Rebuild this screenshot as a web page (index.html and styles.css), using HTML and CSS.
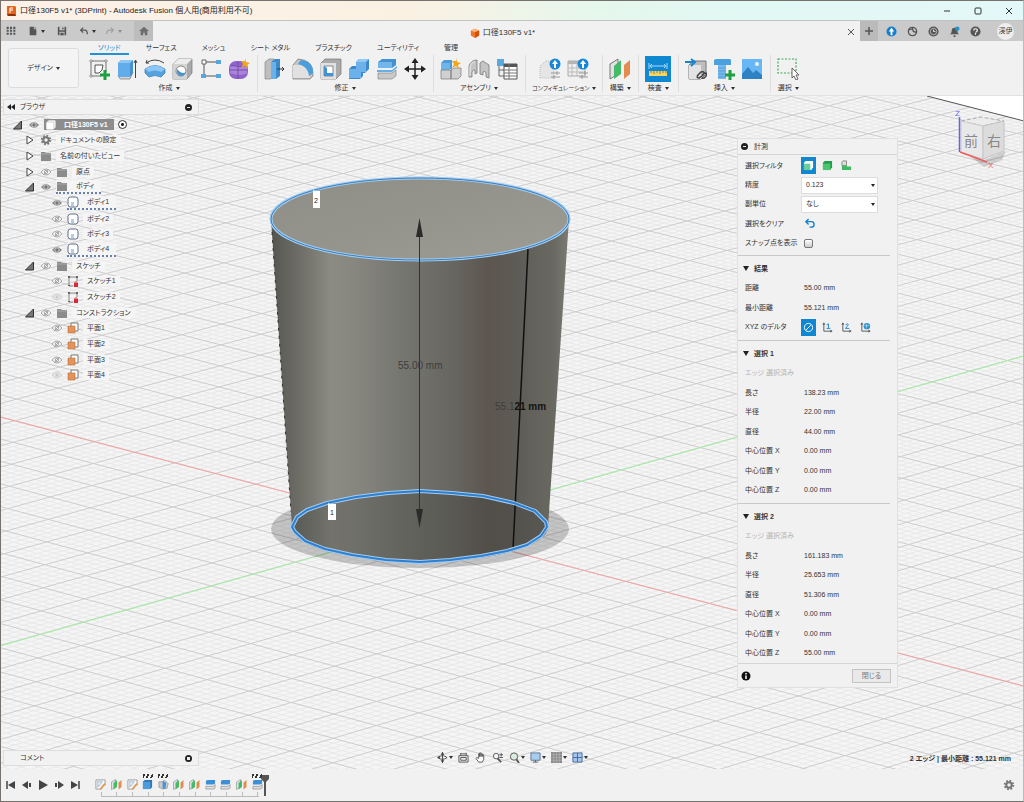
FILE: index.html
```html
<!DOCTYPE html>
<html lang="ja">
<head>
    <meta charset="UTF-8">
    <meta name="viewport" content="width=device-width, initial-scale=1.0">
    <title>口径130F5 v1* (3DPrint) - Autodesk Fusion</title>
    <link rel="stylesheet" href="styles.css">
</head>
<body>
    <svg class="sprite" aria-hidden="true">
        <!-- ribbon icons -->
        <symbol id="i-sketch" viewBox="0 0 22 22"><path d="M3 3h15v11M3 3v15h10" fill="none" stroke="#555" stroke-width=".8"/><path d="M7 7v8h4q4-2 4-8z" fill="#fff" stroke="#555"/><path d="M2 2h2v2H2zM17 2h2v2h-2zM2 17h2v2H2z" fill="#fff" stroke="#777" stroke-width=".7"/><path d="M17 12v10M12 17h10" stroke="#1fa045" stroke-width="3"/></symbol>
        <symbol id="i-extrude" viewBox="0 0 22 22"><path d="M2 17l3-3h12l-3 7H4z" fill="#d5d5d5" stroke="#777" stroke-width=".7"/><path d="M2 5l3-3h12v13l-3 4H2z" fill="#4592d3"/><path d="M2 5h12v14H3q-1 0-1-1z" fill="#62acea"/><path d="M2 5l3-3h12l-3 3z" fill="#8cc7f5"/><path d="M19.500 20V3M18 5l1.500-3L21 5" fill="none" stroke="#444"/></symbol>
        <symbol id="i-revolve" viewBox="0 0 22 22"><path d="M1 11q10-7 20 0v4l-4 4q-6-3-12 0l-4-4z" fill="#55a2df" stroke="#2f7dbd" stroke-width=".7"/><path d="M1 11q10-7 20 0l-4 3q-6-3-12 0z" fill="#8cc7f5"/><path d="M2 5q9-6 18 0M2 5l1-3M2 5h3" fill="none" stroke="#444"/></symbol>
        <symbol id="i-hole" viewBox="0 0 22 22"><path d="M1 6l5-5h14v14l-5 6H1z" fill="#a9a9a9" stroke="#777" stroke-width=".7"/><path d="M1 6h14v15H1z" fill="#d4d4d4"/><path d="M1 6l5-5h14l-5 5z" fill="#ececec"/><circle cx="9" cy="13" r="5" fill="#fff" stroke="#888"/><path d="M5 11q5 6 9 3-2 4-5 4-5-1-4-7z" fill="#4592d3"/></symbol>
        <symbol id="i-pattern" viewBox="0 0 22 22"><path d="M4 4v14h14M4 4h14" fill="none" stroke="#555"/><path d="M2 2h4v4H2z" fill="#fff" stroke="#666"/><path d="M16 2h5v4h-5zM1 16h5v4H1zM16 16h5v4h-5z" fill="#58a6df"/></symbol>
        <symbol id="i-form" viewBox="0 0 22 22"><rect x="1" y="3" width="19" height="18" rx="7" fill="#9065cb"/><path d="M2 9q7-3 17 0v6q-6 4-17 0z" fill="#aa84dc"/><path d="M1 12h18M10 4v17M3 7q10 3 16 0" fill="none" stroke="#6942a0" stroke-width=".8"/><path d="M17 0l1 4 4 1-3 2 1 4-3-3-4 2 2-4-2-3h4z" fill="#f2a51e"/></symbol>
        <symbol id="i-presspull" viewBox="0 0 22 22"><path d="M1 4l4-3h5v17l-3 3H1z" fill="#bebebe" stroke="#888" stroke-width=".7"/><path d="M7 4l4-3h5v17l-4 3H7z" fill="#3c89cd"/><path d="M7 4h5v17H7z" fill="#68b1ea"/><path d="M13 11h7M18 9l2 2-2 2" fill="none" stroke="#333"/></symbol>
        <symbol id="i-fillet" viewBox="0 0 22 22"><path d="M1 7l5-6q15 1 15 14v3l-3 3H1z" fill="#c4c4c4" stroke="#777" stroke-width=".7"/><path d="M1 20V7h7q9 2 10 13z" fill="#e1e1e1"/><path d="M9 2q12 1 12 13l-4 3Q16 8 6 6z" fill="#4b9edd"/></symbol>
        <symbol id="i-shell" viewBox="0 0 22 22"><path d="M1 5l4-4h16v15l-5 5H1z" fill="#aaa" stroke="#777" stroke-width=".7"/><path d="M1 5h15v16H1z" fill="#e1e1e1"/><path d="M4 8h9v10H4z" fill="#fff" stroke="#888"/><path d="M4 18V8l3 2v5h6v3z" fill="#4592d3"/></symbol>
        <symbol id="i-combine" viewBox="0 0 22 22"><path d="M8 4l3-3h10v10l-4 4h-2v3l-3 3H1V11l3-3h4z" fill="#3c89cd"/><path d="M8 4h10v10h-5v6H1v-9h7z" fill="#6bb2ea"/><path d="M8 4l3-3h10l-3 3z" fill="#92caf5"/></symbol>
        <symbol id="i-split" viewBox="0 0 22 22"><path d="M2 4l4-3h14v6l-4 3H2z" fill="#4592d3"/><path d="M2 4h14v6H2z" fill="#72b7ec"/><path d="M1 12h15l5-4v2l-5 4H1z" fill="#66aee8"/><path d="M2 15h14l4-3v6l-4 3H2z" fill="#c9c9c9" stroke="#888" stroke-width=".7"/></symbol>
        <symbol id="i-move" viewBox="0 0 22 22"><path d="M11 2v18M2 11h18" stroke="#222" stroke-width="1.500"/><path d="M11 0l3.500 5h-7zM11 22l3.500-5h-7zM0 11l5-3.500v7zM22 11l-5-3.500v7z" fill="#222"/></symbol>
        <symbol id="i-component" viewBox="0 0 22 22"><path d="M1 5l3-3h8v9H1z" fill="#4c9cda"/><path d="M1 5h9v7H1z" fill="#70b5ea"/><path d="M1 12h10v9H1zM11 12l3-2h7v8l-3 3h-7z" fill="#d0d0d0" stroke="#777" stroke-width=".7"/><path d="M16 0l1 4 4 1-3 2 1 4-3-3-4 2 2-4-2-3h4z" fill="#f2a51e"/></symbol>
        <symbol id="i-joint" viewBox="0 0 22 22"><path d="M1 19V8q2-6 8-6v13l-2 1v-4q-2-1-3 2v5zM21 20V7l-6-4-3 2v11l3 1v-3q2-2 3 1v4z" fill="#c4c4c4" stroke="#777" stroke-width=".8"/><path d="M2 18V9q2-6 5-5" fill="none" stroke="#eee"/></symbol>
        <symbol id="i-bom" viewBox="0 0 22 22"><path d="M1 1h7v7H1z" fill="#5ba7e0"/><path d="M3 8v10h7M3 12h7" fill="none" stroke="#666"/><path d="M8 6h13v15H8z" fill="#fff" stroke="#555"/><path d="M8 6h13v3H8z" fill="#555"/><path d="M8 12h13M8 15h13M8 18h13M13 6v15" stroke="#777"/></symbol>
        <symbol id="i-config" viewBox="0 0 22 22"><path d="M1 20V8l6-5h8v17z" fill="#e5e5e5" stroke="#bbb" stroke-dasharray="1 1"/><path d="M12 15h9M12 19h9M18 13v4M15 17v4" stroke="#999"/><circle cx="16" cy="6" r="5.500" fill="#1687d9"/><path d="M16 2l3 4h-2v4h-2V6h-2z" fill="#fff"/></symbol>
        <symbol id="i-cftable" viewBox="0 0 22 22"><path d="M1 3h17v15H1z" fill="#eee" stroke="#aaa"/><path d="M1 3h17v3H1z" fill="#b5b5b5"/><path d="M1 10h17M1 14h17M5 6v12M10 6v12" stroke="#bbb"/><path d="M12 15h9M12 19h9M18 13v4M15 17v4" stroke="#999"/><circle cx="16" cy="6" r="5.500" fill="#1687d9"/><path d="M16 2l3 4h-2v4h-2V6h-2z" fill="#fff"/></symbol>
        <symbol id="i-plane" viewBox="0 0 22 22"><path d="M1 6l8-5v15l-8 5z" fill="#e2e2e2" stroke="#777"/><path d="M5 8l7-6v14l-7 5z" fill="#43bb68"/><path d="M15 7l6-5v14l-6 5z" fill="#e58b50"/></symbol>
        <symbol id="i-measure" viewBox="0 0 22 22"><path d="M2 5v6M20 5v6M3 8h16M5 6L3 8l2 2M17 6l2 2-2 2" fill="none" stroke="#a9dbff"/><path d="M2 13h18v5H2z" fill="#f4d465"/><path d="M4 13v2M7 13v3M10 13v2M13 13v3M16 13v2M19 13v2" stroke="#555" stroke-width=".7"/></symbol>
        <symbol id="i-insert" viewBox="0 0 22 22"><path d="M4 7l5-4h12v13l-5 5H4z" fill="#bdbdbd" stroke="#777"/><path d="M4 7h12v14H4z" fill="#e3e3e3"/><path d="M0 4h8M6 1l4 3-4 4" fill="none" stroke="#1683d1" stroke-width="2"/><path d="M13 17l3-3q3-1 3 1t-5 5q-3 0-1-3zM17 17l3-2q3 0 1 3t-4 2" fill="none" stroke="#444" stroke-width="1.500"/></symbol>
        <symbol id="i-bolt" viewBox="0 0 22 22"><path d="M1 2l2-1h14l1 1v5H1z" fill="#4ba0dd"/><path d="M5 7h8v14H5z" fill="#76baeb"/><path d="M5 10h8M5 13h8M5 16h8M5 19h8" stroke="#4d94ca" stroke-width=".7"/><path d="M17 12v10M12 17h10" stroke="#1fa045" stroke-width="3"/></symbol>
        <symbol id="i-image" viewBox="0 0 22 22"><path d="M1 1h20v20H1z" fill="#68b6f3"/><circle cx="16" cy="6" r="2" fill="#eef8ff"/><path d="M1 16l6-7 5 6 3-3 6 5v4H1z" fill="#2e82c4"/></symbol>
        <symbol id="i-select" viewBox="0 0 22 22"><path d="M1 1h18v14H1z" fill="none" stroke="#3eaa5d" stroke-width="1.200" stroke-dasharray="2 1.500"/><path d="M15 10v10l2-2 2 4 2-1-2-4h3z" fill="#fff" stroke="#444" stroke-width=".8"/></symbol>
        <!-- browser icons -->
        <symbol id="t-open" viewBox="0 0 12 12"><path d="M9.500 2v8h-8z" fill="#777" stroke="#333"/></symbol>
        <symbol id="t-closed" viewBox="0 0 12 12"><path d="M3 2l6 4-6 4z" fill="#fff" stroke="#444"/></symbol>
        <symbol id="t-eye" viewBox="0 0 12 12"><path d="M1 6q5-6 10 0-5 6-10 0z" fill="#888"/><circle cx="6" cy="6" r="2.200" fill="#777" stroke="#ccc"/></symbol>
        <symbol id="t-eyeoff" viewBox="0 0 12 12"><path d="M1 6q5-6 10 0-5 6-10 0zM3 9l6-6" fill="#f4f4f4" stroke="#aaa"/><circle cx="6" cy="6" r="1.700" fill="none" stroke="#aaa"/></symbol>
        <symbol id="t-eyefaint" viewBox="0 0 12 12"><path d="M1 6q5-6 10 0-5 6-10 0z" fill="#e4e4e4" stroke="#d0d0d0"/><circle cx="6" cy="6" r="1.500" fill="#ccc"/></symbol>
        <symbol id="t-gear" viewBox="0 0 12 12"><circle cx="6" cy="6" r="4" fill="none" stroke="#777" stroke-width="2.500" stroke-dasharray="1.600 1.540"/><circle cx="6" cy="6" r="2.700" fill="none" stroke="#777" stroke-width="2"/></symbol>
        <symbol id="t-folder" viewBox="0 0 12 12"><path d="M1 2h4l1 1h5v8H1z" fill="#8b8b8b"/><path d="M1 4h10" stroke="#aaa"/></symbol>
        <symbol id="t-body" viewBox="0 0 12 12"><rect x="1" y="1" width="10" height="10" rx="2.500" fill="#fff" stroke="#5c6b85"/><path d="M4 6h3v4H4z" fill="#b9cbe4"/></symbol>
        <symbol id="t-doc" viewBox="0 0 12 12"><path d="M2 4l2-2h7v7l-2 2H2z" fill="#ddd" stroke="#fff"/><path d="M2 4h7v7H2z" fill="#fff"/></symbol>
        <symbol id="t-sketch" viewBox="0 0 12 12"><path d="M2 2h8M2 2v9h4M10 2v4" fill="none" stroke="#888"/><path d="M1 1h2v2H1zM9 1h2v2H9zM1 10h2v1H1z" fill="#666"/><path d="M7 8h4v4H7z" fill="#dd2637"/><path d="M7.500 8q1.500-3 3 0" fill="none" stroke="#dd2637"/></symbol>
        <symbol id="t-plane" viewBox="0 0 12 12"><path d="M4 1h7v8H4z" fill="#fff" stroke="#777"/><path d="M1 4h7v7H1z" fill="#e3945a" stroke="#bf6d35" stroke-width=".6"/></symbol>
        <!-- timeline icons -->
        <symbol id="l-sketch" viewBox="0 0 12 12"><path d="M1 1h10v6M1 1v10h6" fill="#fafafa" stroke="#999"/><path d="M3 3h5L3 9z" fill="#e6f0fa" stroke="#7ba3c9" stroke-width=".7"/><path d="M6 11l5-6" stroke="#e09a52" stroke-width="2"/></symbol>
        <symbol id="l-split" viewBox="0 0 12 12"><path d="M1 2l2-1h8v4L9 6H1z" fill="#3b8fd6"/><path d="M1 8h8l2-2v4l-2 1H1z" fill="#ddd" stroke="#888" stroke-width=".7"/></symbol>
        <symbol id="l-extrude" viewBox="0 0 12 12"><path d="M1 3l2-2h8v8l-2 2H1z" fill="#2b77ba"/><path d="M1 3h8v8H1z" fill="#4d9bda"/></symbol>
        <symbol id="l-press" viewBox="0 0 12 12"><path d="M1 3h4l2-2 4 4-1 5-5 1-4-2z" fill="#ccc" stroke="#888" stroke-width=".7"/><path d="M5 2l4 2-1 7-3-1z" fill="#4795d6"/></symbol>
    </svg>

    <div class="app">
        <header class="titlebar">
            <svg class="logo" viewBox="0 0 9 12"><path d="M0 1h8l1 1v9H1l-1-1z" fill="#e8641b"/><path d="M0 9h8l1 2H1z" fill="#8b3408"/><path d="M3 8V3h3M3 5h3" fill="none" stroke="#fff"/></svg>
            <h1>口径130F5 v1* (3DPrint) - Autodesk Fusion 個人用(商用利用不可)</h1>
            <div class="window-buttons">
                <button aria-label="最小化"><svg viewBox="0 0 10 10"><path d="M2 5h6" stroke="#333"/></svg></button>
                <button aria-label="最大化"><svg viewBox="0 0 10 10"><rect x="2" y="2" width="6" height="6" rx="1" fill="none" stroke="#333"/></svg></button>
                <button aria-label="閉じる"><svg viewBox="0 0 10 10"><path d="M2 2l6 6M8 2L2 8" stroke="#333"/></svg></button>
            </div>
        </header>

        <div class="tabbar">
            <div class="quick">
                <button aria-label="データパネル"><svg viewBox="0 0 12 12"><path d="M2 1v10M6 1v10M10 1v10" stroke="#555" stroke-width="2.500" stroke-dasharray="2.500 1"/></svg></button>
                <button aria-label="ファイル" class="drop"><svg viewBox="0 0 12 12"><path d="M2 1h5v3h3v7H2z" fill="#555"/><path d="M8 1l2 2H8z" fill="#555"/></svg></button>
                <button aria-label="保存"><svg viewBox="0 0 12 12"><path d="M1 1h10v10H1z" fill="#555"/><path d="M3 1h6v4H3zM3 7h6v4H3z" fill="#cacaca"/><path d="M4 8h4v3H4zM6 2h2v2H6z" fill="#555"/></svg></button>
                <button aria-label="元に戻す" class="drop"><svg viewBox="0 0 12 12"><path d="M5 2L2 5l3 3M2 5h5q3 0 3 5" fill="none" stroke="#555" stroke-width="1.500"/></svg></button>
                <button aria-label="やり直し" class="drop faded"><svg viewBox="0 0 12 12"><path d="M7 2l3 3-3 3M10 5H5q-3 0-3 5" fill="none" stroke="#666" stroke-width="1.500"/></svg></button>
                <button aria-label="ホーム" class="home"><svg viewBox="0 0 12 12"><path d="M0 6l6-5 6 5h-2v5H7V8H5v3H2V6z" fill="#6d6d6d"/></svg></button>
            </div>
            <div class="doc-tab">
                <svg viewBox="0 0 12 12"><path d="M1 3l5-2 5 2v6l-5 3-5-3z" fill="#f07527"/><path d="M1 3l5-2 5 2-5 2z" fill="#ffb37c"/><path d="M6 5l5-2v6l-5 3z" fill="#cf5207"/></svg>
                <span>口径130F5 v1*</span>
                <button aria-label="タブを閉じる" class="close"><svg viewBox="0 0 10 10"><path d="M2 2l6 6M8 2L2 8" stroke="#555"/></svg></button>
            </div>
            <button aria-label="新規" class="add"><svg viewBox="0 0 12 12"><path d="M6 2v8M2 6h8" stroke="#555" stroke-width="1.500"/></svg></button>
            <div class="account">
                <button aria-label="更新"><svg viewBox="0 0 12 12"><circle cx="6" cy="6" r="5.500" fill="#147fd1"/><path d="M6 2l3 4H7v4H5V6H3z" fill="#fff"/></svg></button>
                <button aria-label="拡張機能"><svg viewBox="0 0 12 12"><circle cx="6" cy="6" r="4.500" fill="none" stroke="#555" stroke-width="1.500"/><path d="M2 4l4-1 1 3 3 1M6 1v3" fill="none" stroke="#555" stroke-width="1.500"/></svg></button>
                <button aria-label="ジョブ"><svg viewBox="0 0 12 12"><circle cx="6" cy="6" r="5.500" fill="#555"/><circle cx="6" cy="6" r="3.500" fill="none" stroke="#bbb"/><path d="M6 4v2h2" fill="none" stroke="#eee"/></svg></button>
                <button aria-label="通知"><svg viewBox="0 0 12 12"><path d="M1 9q2-1 2-4 0-3 3-3t3 3q0 3 2 4zM5 10h2v2H5z" fill="#555"/><circle cx="9" cy="3" r="2.500" fill="#2592c9"/></svg></button>
                <button aria-label="ヘルプ"><svg viewBox="0 0 12 12"><circle cx="6" cy="6" r="5.500" fill="#555"/><path d="M4 5q0-2 2-2t2 1.500Q8 6 6 7M6 8v1.500" fill="none" stroke="#fff" stroke-width="1.300"/></svg></button>
                <button class="avatar">渓伊</button>
            </div>
        </div>

        <div class="ribbon">
            <button class="workspace drop">デザイン</button>
            <div class="ribbon-main">
                <nav class="ribbon-tabs">
                    <button class="active">ソリッド</button>
                    <button>サーフェス</button>
                    <button>メッシュ</button>
                    <button>シート メタル</button>
                    <button>プラスチック</button>
                    <button>ユーティリティ</button>
                    <button>管理</button>
                </nav>
                <div class="groups">
                    <div class="group">
                        <div class="tools">
                            <button aria-label="スケッチを作成"><svg><use href="#i-sketch"/></svg></button>
                            <button aria-label="押し出し"><svg><use href="#i-extrude"/></svg></button>
                            <button aria-label="回転"><svg><use href="#i-revolve"/></svg></button>
                            <button aria-label="穴"><svg><use href="#i-hole"/></svg></button>
                            <button aria-label="パターン"><svg><use href="#i-pattern"/></svg></button>
                            <button aria-label="フォーム"><svg><use href="#i-form"/></svg></button>
                        </div>
                        <button class="label drop">作成</button>
                    </div>
                    <div class="group">
                        <div class="tools">
                            <button aria-label="プレス/プル"><svg><use href="#i-presspull"/></svg></button>
                            <button aria-label="フィレット"><svg><use href="#i-fillet"/></svg></button>
                            <button aria-label="シェル"><svg><use href="#i-shell"/></svg></button>
                            <button aria-label="結合"><svg><use href="#i-combine"/></svg></button>
                            <button aria-label="分割"><svg><use href="#i-split"/></svg></button>
                            <button aria-label="移動"><svg><use href="#i-move"/></svg></button>
                        </div>
                        <button class="label drop">修正</button>
                    </div>
                    <div class="group">
                        <div class="tools">
                            <button aria-label="新規コンポーネント"><svg><use href="#i-component"/></svg></button>
                            <button aria-label="ジョイント"><svg><use href="#i-joint"/></svg></button>
                            <button aria-label="部品表"><svg><use href="#i-bom"/></svg></button>
                        </div>
                        <button class="label drop">アセンブリ</button>
                    </div>
                    <div class="group wide">
                        <div class="tools">
                            <button aria-label="コンフィギュレーションを作成"><svg><use href="#i-config"/></svg></button>
                            <button aria-label="コンフィギュレーション テーブル"><svg><use href="#i-cftable"/></svg></button>
                        </div>
                        <button class="label drop">コンフィギュレーション</button>
                    </div>
                    <div class="group">
                        <div class="tools">
                            <button aria-label="平面"><svg><use href="#i-plane"/></svg></button>
                        </div>
                        <button class="label drop">構築</button>
                    </div>
                    <div class="group">
                        <div class="tools">
                            <button aria-label="計測" class="pressed"><svg><use href="#i-measure"/></svg></button>
                        </div>
                        <button class="label drop">検査</button>
                    </div>
                    <div class="group">
                        <div class="tools">
                            <button aria-label="派生を挿入"><svg><use href="#i-insert"/></svg></button>
                            <button aria-label="ファスナ"><svg><use href="#i-bolt"/></svg></button>
                            <button aria-label="キャンバス"><svg><use href="#i-image"/></svg></button>
                        </div>
                        <button class="label drop">挿入</button>
                    </div>
                    <div class="group">
                        <div class="tools">
                            <button aria-label="選択"><svg><use href="#i-select"/></svg></button>
                        </div>
                        <button class="label drop">選択</button>
                    </div>
                </div>
            </div>
        </div>

        <main class="viewport">
            <svg class="scene" viewBox="0 96 1024 673" preserveAspectRatio="xMidYMid slice">
                <defs>
                    <linearGradient id="side">
                        <stop offset="0" stop-color="#55554f"/>
                        <stop offset=".05" stop-color="#63635d"/>
                        <stop offset=".12" stop-color="#74746d"/>
                        <stop offset=".2" stop-color="#8b8b83"/>
                        <stop offset=".28" stop-color="#87877f"/>
                        <stop offset=".42" stop-color="#777871"/>
                        <stop offset=".62" stop-color="#66655f"/>
                        <stop offset=".73" stop-color="#5c564f"/>
                        <stop offset=".82" stop-color="#5d5b55"/>
                        <stop offset=".95" stop-color="#696962"/>
                        <stop offset="1" stop-color="#7c7c74"/>
                    </linearGradient>
                    <linearGradient id="cap" x2="1" y2="1">
                        <stop offset="0" stop-color="#8e8d86"/>
                        <stop offset="1" stop-color="#9d9c93"/>
                    </linearGradient>
                    <path id="base" d="M292 527L297 517 307 510 327 503 356 497 388 493 420 491 452 493 483 496 514 503 535 511 546 522 547 527 541 536 527 545 507 551 481 556 450 560 420 562 386 560 352 555 325 549 305 541 295 532z"/>
                </defs>
                <path id="grid-minor" class="minor"/>
                <path id="grid-major" class="major"/>
                <path d="M927 96L1024 121V96z" fill="#fff"/>
                <path d="M927 96l97 25" stroke="#555"/>
                <path d="M0 417L1024 686" stroke="#f7a3a3"/>
                <path d="M0 646L1024 356" stroke="#a4f0a4"/>

                <ellipse cx="420" cy="529" rx="149" ry="39" fill="#000" opacity=".2"/>
                <path d="M271 219L292 527A128 35 0 0 0 548 527L569 219z" fill="url(#side)"/>
                <ellipse cx="420" cy="527" rx="127" ry="35" fill="#3c3b38" opacity=".3"/>
                <path d="M272 232l19 280" stroke="#333" stroke-dasharray="3 5"/>
                <ellipse cx="420" cy="219" rx="149" ry="41" fill="url(#cap)" stroke="#9fcdf4" stroke-width="3"/>
                <ellipse cx="420" cy="219" rx="149" ry="41" fill="none" stroke="#3c7ebc"/>
                <path d="M528 249l-15 300" stroke="#111" stroke-width="1.500"/>
                <use href="#base" class="base-glow"/>
                <use href="#base" class="base-line"/>
                <path d="M419.500 225v295" stroke="#333"/>
                <path d="M419.500 218l3.500 19h-7zM419.500 528l3.500-19h-7z" fill="#2b2b29"/>
                <path d="M313 190l2 1h5v17h-7zM328 503l2 1h6v16h-8z" fill="#fff"/>
                <text x="314" y="203" class="tag">2</text>
                <text x="330" y="515" class="tag">1</text>
                <text x="398" y="369" class="dim">55.00 mm</text>
                <text x="495" y="410" class="dim">55.1<tspan class="near">21 mm</tspan></text>

                <!-- view cube -->
                <path d="M962 150l22 10 22-9-4 9-18 7z" fill="#000" opacity=".15"/>
                <path d="M961 121l20-4 23 4-21 5z" fill="#ececec" stroke="#aaa" stroke-dasharray="4 2"/>
                <path d="M961 121l22 5v33l-22-7z" fill="#e8e8e8" stroke="#ccc"/>
                <path d="M983 126l21-5v30l-21 8z" fill="#dcdcdc" stroke="#c4c4c4"/>
                <path d="M959.500 117v35" stroke="#6363e8" stroke-width="1.500"/>
                <path d="M960 152l27 10" stroke="#ef5b5b" stroke-width="1.500"/>
                <text x="964" y="146" class="face">前</text>
                <text x="987" y="146" class="face">右</text>
                <text x="955" y="116" class="axis-z">Z</text>
                <text x="988" y="168" class="axis-x">X</text>
            </svg>

            <section class="browser">
                <header class="bar"><svg viewBox="0 0 8 8"><path d="M4 1v6L0 4zM8 1v6L4 4z" fill="#222"/></svg><span>ブラウザ</span><button aria-label="最小化" class="dot"></button></header>
                <ul class="tree">
                    <li class="root"><svg><use href="#t-open"/></svg><svg><use href="#t-eye"/></svg><span class="chip"><svg><use href="#t-doc"/></svg>口径130F5 v1</span><input type="radio" checked aria-label="アクティブ"></li>
                    <li><svg><use href="#t-closed"/></svg><svg><use href="#t-gear"/></svg><span>ドキュメントの設定</span></li>
                    <li><svg><use href="#t-closed"/></svg><svg><use href="#t-folder"/></svg><span>名前の付いたビュー</span></li>
                    <li><svg><use href="#t-closed"/></svg><svg><use href="#t-eyeoff"/></svg><svg><use href="#t-folder"/></svg><span>原点</span></li>
                    <li><svg><use href="#t-open"/></svg><svg><use href="#t-eye"/></svg><span class="marked"><svg><use href="#t-folder"/></svg>ボディ</span></li>
                    <li class="leaf"><svg><use href="#t-eye"/></svg><span class="marked"><svg><use href="#t-body"/></svg>ボディ1</span></li>
                    <li class="leaf"><svg><use href="#t-eyeoff"/></svg><svg><use href="#t-body"/></svg><span>ボディ2</span></li>
                    <li class="leaf"><svg><use href="#t-eyeoff"/></svg><svg><use href="#t-body"/></svg><span>ボディ3</span></li>
                    <li class="leaf"><svg><use href="#t-eye"/></svg><span class="marked"><svg><use href="#t-body"/></svg>ボディ4</span></li>
                    <li><svg><use href="#t-open"/></svg><svg><use href="#t-eyeoff"/></svg><svg><use href="#t-folder"/></svg><span>スケッチ</span></li>
                    <li class="leaf"><svg><use href="#t-eyeoff"/></svg><svg><use href="#t-sketch"/></svg><span>スケッチ1</span></li>
                    <li class="leaf"><svg><use href="#t-eyefaint"/></svg><svg><use href="#t-sketch"/></svg><span>スケッチ2</span></li>
                    <li><svg><use href="#t-open"/></svg><svg><use href="#t-eyeoff"/></svg><svg><use href="#t-folder"/></svg><span>コンストラクション</span></li>
                    <li class="leaf"><svg><use href="#t-eyeoff"/></svg><svg><use href="#t-plane"/></svg><span>平面1</span></li>
                    <li class="leaf"><svg><use href="#t-eyeoff"/></svg><svg><use href="#t-plane"/></svg><span>平面2</span></li>
                    <li class="leaf"><svg><use href="#t-eyeoff"/></svg><svg><use href="#t-plane"/></svg><span>平面3</span></li>
                    <li class="leaf"><svg><use href="#t-eyefaint"/></svg><svg><use href="#t-plane"/></svg><span>平面4</span></li>
                </ul>
            </section>

            <section class="measure">
                <header><button aria-label="最小化" class="dot"></button><span>計測</span></header>
                <div class="rows five">
                    <div class="row"><span>選択フィルタ</span>
                        <div class="picks">
                            <button class="pressed" aria-label="面/エッジ"><svg viewBox="0 0 12 12"><path d="M1 3l2-2h8v7l-2 3H1z" fill="#fff"/><path d="M1 4h7v7H1z" fill="#68ce9b"/></svg></button>
                            <button aria-label="ボディ"><svg viewBox="0 0 12 12"><path d="M1 3l2-2h8v7l-2 3H1z" fill="#249d4c"/><path d="M1 4h8v7H1z" fill="#4bc66f"/></svg></button>
                            <button aria-label="コンポーネント"><svg viewBox="0 0 12 12"><path d="M1 6V2l1-1h4v5z" fill="#ddd" stroke="#888"/><path d="M1 6h5l1 1h4v4H1z" fill="#3dba63"/></svg></button>
                        </div>
                    </div>
                    <div class="row"><label for="precision">精度</label><div class="combo"><select id="precision"><option>0.123</option></select></div></div>
                    <div class="row"><label for="unit">副単位</label><div class="combo"><select id="unit"><option>なし</option></select></div></div>
                    <div class="row"><span>選択をクリア</span><button aria-label="選択をクリア" class="undo"><svg viewBox="0 0 12 12"><path d="M5 1L2 4l3 3M2 4h6q3 0 3 3t-3 3H6" fill="none" stroke="#1580cf" stroke-width="1.500"/></svg></button></div>
                    <div class="row"><label for="snap">スナップ点を表示</label><input type="checkbox" id="snap"></div>
                </div>
                <div class="rows four">
                    <h2>結果</h2>
                    <div class="row"><span>距離</span><span>55.00 mm</span></div>
                    <div class="row"><span>最小距離</span><span>55.121 mm</span></div>
                    <div class="row"><span>XYZ のデルタ</span>
                        <div class="picks">
                            <button class="pressed" aria-label="なし"><svg viewBox="0 0 12 12"><circle cx="6" cy="6" r="4.500" fill="none" stroke="#fff"/><path d="M3 9l6-6" stroke="#fff"/></svg></button>
                            <button aria-label="選択 1"><svg viewBox="0 0 12 12"><path d="M2 1v9h9M1 3l1-2 1 2M9 9l2 1-2 1" fill="none" stroke="#555"/><path d="M5 3l2-1v5M5 7h4" fill="none" stroke="#1580cf"/></svg></button>
                            <button aria-label="選択 2"><svg viewBox="0 0 12 12"><path d="M2 1v9h9M1 3l1-2 1 2M9 9l2 1-2 1" fill="none" stroke="#555"/><path d="M5 3q3-2 3 0L5 7h4" fill="none" stroke="#1580cf"/></svg></button>
                            <button aria-label="ワールド"><svg viewBox="0 0 12 12"><path d="M2 1v9h9M1 3l1-2 1 2M9 9l2 1-2 1" fill="none" stroke="#555"/><circle cx="7.500" cy="4.500" r="3.500" fill="#2c93d2"/><path d="M5 4h5M7 2v5" stroke="#bfe2f6" stroke-width=".7"/></svg></button>
                        </div>
                    </div>
                </div>
                <div class="rows eight">
                    <h2>選択 1</h2>
                    <p>エッジ 選択済み</p>
                    <div class="row"><span>長さ</span><span>138.23 mm</span></div>
                    <div class="row"><span>半径</span><span>22.00 mm</span></div>
                    <div class="row"><span>直径</span><span>44.00 mm</span></div>
                    <div class="row"><span>中心位置 X</span><span>0.00 mm</span></div>
                    <div class="row"><span>中心位置 Y</span><span>0.00 mm</span></div>
                    <div class="row"><span>中心位置 Z</span><span>0.00 mm</span></div>
                </div>
                <div class="rows eight last">
                    <h2>選択 2</h2>
                    <p>エッジ 選択済み</p>
                    <div class="row"><span>長さ</span><span>161.183 mm</span></div>
                    <div class="row"><span>半径</span><span>25.653 mm</span></div>
                    <div class="row"><span>直径</span><span>51.306 mm</span></div>
                    <div class="row"><span>中心位置 X</span><span>0.00 mm</span></div>
                    <div class="row"><span>中心位置 Y</span><span>0.00 mm</span></div>
                    <div class="row"><span>中心位置 Z</span><span>55.00 mm</span></div>
                </div>
                <footer>
                    <svg viewBox="0 0 10 10"><circle cx="5" cy="5" r="4.500" fill="#111"/><path d="M5 2v1.500M5 4.500V8" stroke="#fff" stroke-width="1.500"/></svg>
                    <button>閉じる</button>
                </footer>
            </section>

            <section class="comment bar"><span>コメント</span><button aria-label="展開" class="dot plus"></button></section>

            <nav class="navbar">
                <button aria-label="オービット" class="drop"><svg viewBox="0 0 12 12"><path d="M6 0v12M1 6q5-4 10 0-5 4-10 0z" fill="none" stroke="#444"/><path d="M4 3l2-3 2 3zM4 9l2 3 2-3zM3 4v4L0 6z" fill="#444"/></svg></button>
                <button aria-label="ビュー正面"><svg viewBox="0 0 12 12"><path d="M1 4h10v7H1z" fill="#eee" stroke="#555"/><path d="M3 6h6v3H3zM3 1v3M9 1v3M3 2h6" fill="none" stroke="#555"/></svg></button>
                <button aria-label="画面移動"><svg viewBox="0 0 12 12"><path d="M4 11L1 7l1-1 2 1V2h1v3-4h1.500v4-3H8v3-2h1.500v5L8 11z" fill="#fff" stroke="#555"/></svg></button>
                <button aria-label="ズーム"><svg viewBox="0 0 12 12"><circle cx="4.500" cy="4.500" r="3" fill="#eef5fb" stroke="#555"/><path d="M6 7l4 4" stroke="#555" stroke-width="2"/><path d="M10 1v4M8 3h4M8 6h4" stroke="#555"/></svg></button>
                <button aria-label="フィット" class="drop"><svg viewBox="0 0 12 12"><circle cx="5.500" cy="5" r="4" fill="#dcebdc" stroke="#555"/><path d="M8 8l3 4" stroke="#555" stroke-width="2"/></svg></button>
                <button aria-label="表示設定" class="drop"><svg viewBox="0 0 12 12"><path d="M1 1h10v8H1z" fill="#a9cdef" stroke="#5d7490"/><path d="M6 9v2M3 11h6" stroke="#555"/></svg></button>
                <button aria-label="グリッドとスナップ" class="drop"><svg viewBox="0 0 12 12"><path d="M0 0h12v12H0z" fill="#8c8c8c"/><path d="M0 3h12M0 6h12M0 9h12M3 0v12M6 0v12M9 0v12" stroke="#b5b5b5" stroke-width=".7"/></svg></button>
                <button aria-label="ビューポート" class="drop"><svg viewBox="0 0 12 12"><path d="M1 1h10v10H1zM6 1v10M1 6h10" fill="#a5c7ed" stroke="#446796"/></svg></button>
            </nav>
            <p class="status">2 エッジ | 最小距離 : 55.121 mm</p>
        </main>

        <footer class="timeline">
            <div class="player">
                <button aria-label="先頭"><svg viewBox="0 0 12 12"><path d="M2 2v8" stroke="#444" stroke-width="1.500"/><path d="M10 2v8L3 6z" fill="#444"/></svg></button>
                <button aria-label="戻る"><svg viewBox="0 0 12 12"><path d="M7 2v8L1 6z" fill="#444"/><path d="M9 4v4" stroke="#444" stroke-width="2"/></svg></button>
                <button aria-label="再生"><svg viewBox="0 0 12 12"><path d="M2 1l9 5-9 5z" fill="#444"/></svg></button>
                <button aria-label="進む"><svg viewBox="0 0 12 12"><path d="M5 2v8l6-4z" fill="#444"/><path d="M3 4v4" stroke="#444" stroke-width="2"/></svg></button>
                <button aria-label="最後"><svg viewBox="0 0 12 12"><path d="M10 2v8" stroke="#444" stroke-width="1.500"/><path d="M2 2v8l7-4z" fill="#444"/></svg></button>
            </div>
            <ol class="history">
                <li><svg><use href="#l-sketch"/></svg></li>
                <li><svg><use href="#i-plane"/></svg></li>
                <li><svg><use href="#l-sketch"/></svg></li>
                <li class="ticks"><svg><use href="#l-extrude"/></svg></li>
                <li class="ticks"><svg><use href="#l-press"/></svg></li>
                <li><svg><use href="#i-plane"/></svg></li>
                <li><svg><use href="#i-plane"/></svg></li>
                <li><svg><use href="#l-split"/></svg></li>
                <li><svg><use href="#l-split"/></svg></li>
                <li><svg><use href="#i-plane"/></svg></li>
                <li class="ticks"><svg><use href="#l-split"/></svg></li>
            </ol>
            <svg class="marker" viewBox="0 0 8 22"><path d="M0 1h8v4L5 8H3L0 5z" fill="#555"/><path d="M4 6v16" stroke="#555" stroke-width="2"/></svg>
            <button aria-label="設定" class="settings"><svg><use href="#t-gear"/></svg></button>
        </footer>
    </div>

    <script src="script.js"></script>
</body>
</html>
```

FILE: styles.css
```css
* {
    box-sizing: border-box;
}
body {
    margin: 0;
    font-family: "Liberation Sans", "Noto Sans CJK JP", sans-serif;
    font-size: 7px;
    line-height: 10px;
    color: #333;
    font-feature-settings: "palt";
    background-color: #f1f1f1;
}
button, select, input {
    font: inherit;
    color: inherit;
    font-feature-settings: inherit;
    margin: 0;
}
button {
    padding: 0;
    border: none;
    background: none;
    display: flex;
    align-items: center;
    justify-content: center;
    cursor: pointer;
}
h1, h2, p, ul, ol {
    margin: 0;
    padding: 0;
    list-style: none;
}
svg {
    display: block;
    width: 12px;
    height: 12px;
    flex: none;
}
.sprite {
    position: absolute;
    width: 0;
    height: 0;
}
.drop::after {
    content: "";
    margin-left: 3px;
    border: 2px solid transparent;
    border-top: 3px solid #333;
    border-bottom: none;
}
.app {
    display: flex;
    flex-direction: column;
    height: 100vh;
    border: 1px solid #77716d;
    border-right-color: #bbb;
}

/* title bar */
.titlebar {
    display: flex;
    align-items: center;
    height: 19px;
    padding: 0 9px 0 6px;
    gap: 4px;
    background: linear-gradient(90deg, #fdf1e8, #faf1e3 40%, #e6f7ec 58%, #e2f8f3 70%, #e3f8f8);
}
.titlebar .logo {
    width: 9px;
}
.titlebar h1 {
    font-size: 8px;
    font-weight: normal;
    color: #222;
}
.window-buttons {
    display: flex;
    gap: 21px;
    margin-left: auto;
}
.window-buttons svg, .close svg {
    width: 10px;
    height: 10px;
}

/* document tabs */
.tabbar {
    display: flex;
    height: 21px;
    background-color: #cacaca;
    border-top: 1px solid #bfc4c3;
}
.quick {
    display: flex;
    align-items: center;
    padding-left: 5px;
    width: 152px;
    gap: 12px;
}
.quick svg {
    width: 10px;
    height: 10px;
}
.quick .drop::after {
    margin-left: 3px;
}
.quick .faded {
    opacity: .4;
    margin-left: -3px;
}
.quick .home {
    width: 27px;
    height: 20px;
    margin-left: auto;
    background-color: #bdbdbd;
}
.doc-tab {
    flex: 1;
    display: flex;
    align-items: center;
    justify-content: center;
    gap: 3px;
    position: relative;
    padding: 4px 8px 0 0;
    font-size: 8px;
    background-color: #f1f1f1;
}
.doc-tab > svg {
    width: 10px;
    height: 10px;
}
.doc-tab .close {
    position: absolute;
    right: 4px;
    top: 6px;
}
.add {
    width: 18px;
    background-color: #bababa;
}
.account {
    display: flex;
    align-items: center;
    gap: 10px;
    padding: 0 9px 0 8px;
}
.account svg {
    width: 11px;
    height: 11px;
}
.avatar {
    width: 17px;
    height: 17px;
    margin-left: 6px;
    border-radius: 50%;
    background-color: #eee;
}

/* ribbon */
.ribbon {
    display: flex;
    height: 55px;
    background-color: #f1f1f1;
    border-bottom: 1px solid #e2e2e2;
}
.workspace {
    width: 71px;
    height: 40px;
    margin: 7px 8px 0 7px;
    border: 1px solid #dcdcdc;
    border-radius: 3px;
    background-color: #f4f4f4;
}
.ribbon-main {
    flex: 1;
}
.ribbon-tabs {
    display: flex;
    gap: 9px;
    padding: 2px 0 0 3px;
}
.ribbon-tabs button {
    height: 12px;
    padding: 0 8px;
    border-bottom: 2px solid transparent;
}
.ribbon-tabs .active {
    color: #1f8ccc;
    border-bottom-color: #2193d3;
}
.groups {
    display: flex;
}
.group {
    padding: 3px 7px 0 6px;
    border-right: 1px solid #dedede;
    height: 37px;
}
.group:first-child {
    padding-left: 1px;
}
.group:last-child {
    border-right: none;
}
.group.wide {
    padding: 3px 6px 0;
}
.tools {
    display: flex;
    justify-content: center;
    gap: 6px;
    height: 22px;
}
.tools svg {
    width: 22px;
    height: 22px;
}
.tools .pressed {
    width: 26px;
    height: 26px;
    margin-top: -2px;
}
.pressed {
    background-color: #0f87d1;
}
.label {
    width: 100%;
    height: 10px;
    margin-top: 3px;
    white-space: nowrap;
}
.wide .label {
    font-size: 6px;
}

/* model view */
.viewport {
    flex: 1;
    position: relative;
    overflow: hidden;
    background-color: #f5f5f5;
}
.scene {
    position: absolute;
    width: 100%;
    height: 100%;
}
.minor, .major {
    fill: none;
    stroke: #e9e9e9;
    stroke-width: 1px;
}
.major {
    stroke: #cdcdcd;
}
.base-glow, .base-line {
    fill: none;
    stroke: #a2cdf3;
    stroke-width: 4px;
    stroke-linejoin: round;
}
.base-line {
    stroke: #2e7fd0;
    stroke-width: 2px;
}
.dim {
    font-size: 10px;
    fill: #3e3e3b;
}
.near {
    font-weight: bold;
    fill: #111;
}
.tag {
    font-size: 7px;
    fill: #222;
}
.face {
    font-size: 14px;
    fill: #888;
}
.axis-z, .axis-x {
    font-size: 8px;
    fill: #6a6ae6;
}
.axis-x {
    fill: #ef6363;
}
.bar {
    display: flex;
    align-items: center;
    height: 16px;
    padding: 0 6px 0 3px;
    border: 1px solid #ddd;
    background-color: #f2f2f2;
}
.bar svg {
    width: 8px;
    height: 8px;
    margin-right: 5px;
}
.dot {
    width: 7px;
    height: 7px;
    border-radius: 50%;
    background-color: #222;
}
.dot::before {
    content: "";
    width: 3px;
    height: 1px;
    background-color: #eee;
}
.dot.plus::before {
    height: 3px;
}
.bar .dot {
    margin-left: auto;
}
.browser {
    position: absolute;
    left: 2px;
    top: 3px;
    width: 196px;
}
.tree {
    display: grid;
    grid-auto-rows: 1fr;
    height: 266px;
    margin-top: 2px;
}
.tree li {
    display: flex;
    align-items: center;
    gap: 4px;
    padding-left: 21px;
}
.tree .root {
    padding-left: 9px;
}
.tree .leaf {
    padding-left: 48px;
}
.tree li > span {
    background-color: #f5f5f5;
    padding: 0 4px;
}
.tree .chip {
    display: flex;
    align-items: center;
    gap: 8px;
    height: 11px;
    padding: 0 6px 0 1px;
    background-color: #8d8d8d;
    color: #fff;
    font-weight: bold;
}
.chip svg {
    width: 11px;
    height: 11px;
}
.tree .marked {
    display: flex;
    align-items: center;
    gap: 8px;
    padding: 0 7px 0 0;
    border-bottom: 2px dotted #6681ad;
}
.tree input {
    appearance: none;
    width: 9px;
    height: 9px;
    border: 1px solid #333;
    border-radius: 50%;
    background: radial-gradient(#222 1px, #fff 2px);
}

/* measure palette */
.measure {
    position: absolute;
    right: 125px;
    top: 42px;
    width: 161px;
    background-color: #f1f1f1;
    border: 1px solid #e0e0e0;
}
.measure header {
    display: flex;
    align-items: center;
    gap: 6px;
    height: 16px;
    padding-left: 3px;
    border-bottom: 1px solid #d5d5d5;
}
.rows {
    display: grid;
    grid-auto-rows: 1fr;
    margin-right: 7px;
    padding: 3px 0;
    border-bottom: 1px solid #c8c8c8;
}
.rows.five {
    height: 101px;
    padding: 1px 0 2px;
}
.rows.four {
    height: 85px;
}
.rows.eight {
    height: 163px;
}
.rows.last {
    height: 160px;
    padding-bottom: 0;
    margin-right: 0;
    border-bottom-color: #d5d5d5;
}
.row {
    display: grid;
    grid-template-columns: 59px 1fr;
    align-items: center;
    padding-left: 7px;
}
.rows h2, .rows p {
    display: flex;
    align-items: center;
    font-size: 7px;
    padding-left: 7px;
}
.rows h2 {
    gap: 5px;
    padding-left: 5px;
}
.rows h2::before {
    content: "";
    border: 3px solid transparent;
    border-top: 5px solid #222;
    border-bottom: none;
}
.rows p {
    color: #b5b5b5;
}
.picks {
    display: flex;
    gap: 4px;
    margin-left: -3px;
}
.picks button {
    width: 15px;
    height: 17px;
}
.picks svg, .undo svg {
    width: 11px;
    height: 11px;
}
.undo {
    justify-self: start;
}
.combo {
    display: flex;
    align-items: center;
    position: relative;
    width: 77px;
    margin-left: -3px;
}
.combo::after {
    content: "";
    position: absolute;
    right: 3px;
    border: 2px solid transparent;
    border-top: 3px solid #222;
    border-bottom: none;
}
.combo select {
    appearance: none;
    width: 100%;
    height: 17px;
    padding: 0 4px;
    border: 1px solid #dcdcdc;
    border-radius: 0;
    background-color: #fff;
}
.row input {
    appearance: none;
    width: 9px;
    height: 9px;
    border: 1px solid #777;
    border-radius: 2px;
    background: linear-gradient(#fff, #ccc);
}
.measure > footer {
    display: flex;
    align-items: center;
    justify-content: space-between;
    height: 23px;
    padding: 0 6px 0 3px;
}
.measure > footer svg {
    width: 10px;
    height: 10px;
}
.measure > footer button {
    width: 39px;
    height: 14px;
    border: 1px solid #c4c4c4;
    background-color: #e9e9e9;
    color: #777;
}

.comment {
    position: absolute;
    left: 2px;
    bottom: 3px;
    width: 196px;
    padding-left: 16px;
}
.navbar {
    position: absolute;
    left: 50%;
    bottom: 6px;
    margin-left: -75px;
    display: flex;
    gap: 6px;
}
.navbar svg {
    width: 11px;
    height: 11px;
}
.navbar .drop::after {
    margin: 0 -1px 0 1px;
}
.status {
    position: absolute;
    right: 12px;
    bottom: 5px;
    font-weight: bold;
}

/* timeline */
.timeline {
    display: flex;
    align-items: center;
    height: 32px;
    padding: 0 8px 0 4px;
    background-color: #f1f1f1;
}
.player {
    display: flex;
    gap: 4px;
}
.history {
    display: grid;
    grid-template-columns: repeat(11, 1fr);
    width: 172px;
    height: 20px;
    margin: 4px 0 0 12px;
}
.history li {
    position: relative;
    display: flex;
    justify-content: center;
    height: 20px;
    padding-top: 2px;
}
.history svg {
    width: 11px;
    height: 11px;
}
/* bracket under the features */
.history li::after {
    content: "";
    position: absolute;
    left: 50%;
    bottom: 0;
    width: 100%;
    height: 4px;
    border: solid #bbb;
    border-width: 0 0 1px 1px;
}
.history li:last-child::after {
    width: 1px;
}
.history .ticks::before {
    content: "";
    position: absolute;
    top: -3px;
    width: 10px;
    height: 4px;
    background: repeating-linear-gradient(115deg, #333 0 2px, transparent 2px 4px);
}
.timeline .marker {
    width: 8px;
    height: 22px;
    margin-left: -4px;
}
.settings {
    margin-left: auto;
}
```

FILE: script.js
```javascript
// ground plane: 10 mm cells, five minor lines in each
const origin = { x: 419, y: 527 };
const depthX = 0.0015;
const depthY = 0.003;
const reach = 44;

function project(u, v) {
    const w = 1 + depthY * v - depthX * u;
    const x = origin.x + 41 * (u + v) / w;
    const y = origin.y + (10.8 * u - 11.6 * v) / w;
    return Math.round(x * 10) / 10 + " " + Math.round(y * 10) / 10;
}

function lines(step, skip) {
    let d = "";
    for (let i = -reach / step; i <= reach / step; i++) {
        if (skip && i % skip === 0) continue;
        const n = i * step;
        d += "M" + project(-reach, n) + "L" + project(reach, n);
        d += "M" + project(n, -reach) + "L" + project(n, reach);
    }
    return d;
}

document.getElementById("grid-minor").setAttribute("d", lines(0.2, 5));
document.getElementById("grid-major").setAttribute("d", lines(1, 0));
```
